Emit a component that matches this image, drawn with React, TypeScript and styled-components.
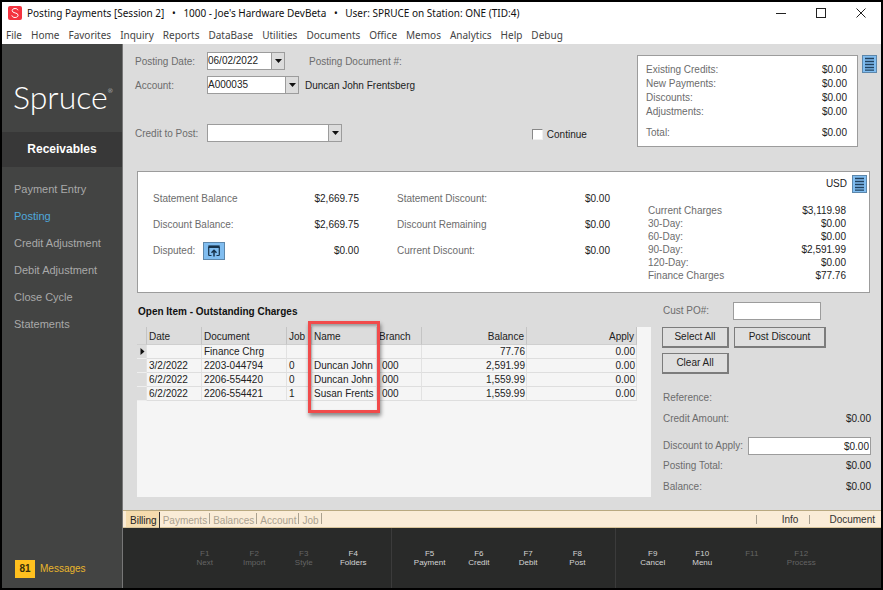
import React from "react";
import styled, { createGlobalStyle } from "styled-components";

const GlobalStyle = createGlobalStyle`
  *, *::before, *::after { box-sizing: border-box; }
  body {
    margin: 0;
    background: #000;
    font: 10px/14px "Liberation Sans", Arial, sans-serif;
    color: #222;
  }
  button, input, select { font: inherit; color: inherit; margin: 0; }
`;

const color = {
  sidebar: "#434443",
  panel: "#dcdcdc",
  label: "#6c6c6c",
  line: "#9c9c9c",
  blue: "#80bdf0",
};

const Window = styled.div`
  display: flex;
  flex-direction: column;
  min-height: 100vh;
  border: 2px solid #000;
  background: #fff;
`;

/* Title bar and menu */

const TitleBar = styled.header`
  display: flex;
  align-items: center;
  height: 22px;
  padding-left: 6px;
  font: 10px/16px "Noto Sans", "Open Sans", sans-serif;
  color: #111;
`;

const TitleText = styled.h1`
  display: flex;
  flex: 1;
  margin: 0 0 0 5px;
  font: inherit;
  white-space: pre;
`;

const Dot = styled.span`
  width: 19px;
  text-align: center;
`;

const CaptionButton = styled.button`
  display: grid;
  place-items: center;
  width: 40px;
  height: 22px;
  padding: 0;
  border: 0;
  background: none;
`;

const MenuBar = styled.nav`
  display: flex;
  gap: 9px;
  height: 20px;
  padding: 2px 4px 0;
  font: 10px/18px "Noto Sans", "Open Sans", sans-serif;
`;

const MenuLink = styled.a`
  color: #444;
  text-decoration: none;
`;

/* Sidebar */

const Body = styled.div`
  display: flex;
  flex: 1;
`;

const Sidebar = styled.aside`
  display: flex;
  flex-direction: column;
  flex: 0 0 121px;
  border-right: 1px solid #777;
  background: ${color.sidebar};
`;

const Brand = styled.div`
  display: flex;
  align-items: flex-start;
  height: 88px;
  padding: 33px 0 0 11px;
  font: 300 32px/40px Lato, sans-serif;
  color: #fff;
`;

const Registered = styled.span`
  margin-top: 10px;
  font-size: 6px;
  line-height: 8px;
`;

const SectionTitle = styled.h2`
  margin: 0;
  background: #383838;
  font-size: 12px;
  line-height: 35px;
  text-align: center;
  color: #fff;
`;

const SideNav = styled.nav`
  display: flex;
  flex-direction: column;
  flex: 1;
  padding: 9px 0 0 12px;
`;

const SideLink = styled.a<{ $active?: boolean }>`
  font-size: 11px;
  line-height: 27px;
  text-decoration: none;
  color: ${(p) => (p.$active ? "#4fa9dc" : "#a9a9a9")};
`;

const Messages = styled.a`
  display: flex;
  align-items: center;
  gap: 5px;
  padding: 0 0 10px 13px;
  color: #e9b62c;
  text-decoration: none;
`;

const Count = styled.b`
  width: 20px;
  background: #ffc01f;
  line-height: 18px;
  text-align: center;
  color: #3a3009;
`;

/* Work area */

const Main = styled.main`
  display: flex;
  flex-direction: column;
  flex: 1;
  min-width: 0;
  background: ${color.panel};
`;

const Top = styled.section`
  display: grid;
  grid-template-columns: minmax(0, 1fr) 221px 19px;
  padding: 8px 4px 0 12px;
`;

const Fields = styled.div`
  display: flex;
  flex-direction: column;
  gap: 6px;
`;

const FieldRow = styled.div<{ $spaced?: boolean }>`
  display: flex;
  align-items: center;
  height: 18px;
  margin-top: ${(p) => (p.$spaced ? "24px" : "0")};
  white-space: nowrap;
`;

const FieldLabel = styled.label`
  width: 72px;
  padding-top: 2px;
  color: ${color.label};
`;

const Note = styled.span<{ $muted?: boolean }>`
  margin-left: ${(p) => (p.$muted ? "24px" : "6px")};
  padding-top: 2px;
  color: ${(p) => (p.$muted ? color.label : "#222")};
`;

const Combo = styled.span<{ $width: number }>`
  display: grid;
  grid-template-columns: 1fr 13px;
  width: ${(p) => p.$width}px;
  height: 18px;
  border: 1px solid ${color.line};
  background: #fff;
`;

const ComboSelect = styled.select`
  grid-area: 1 / 1 / 2 / 3;
  appearance: none;
  border: 0;
  padding: 0 14px 1px 0;
  background: transparent;
  outline: 0;
`;

const ComboArrow = styled.span`
  grid-area: 1 / 2;
  display: grid;
  place-items: center;
  border-left: 1px solid ${color.line};
  background: ${color.panel};
  pointer-events: none;
`;

const CheckLabel = styled.label`
  display: flex;
  align-items: center;
  gap: 4px;
  margin: 3px 10% 0 auto;
`;

const Check = styled.input`
  appearance: none;
  width: 11px;
  height: 11px;
  margin: 0;
  border: 1px solid #f0f0f0;
  border-top-color: #888;
  border-left-color: #888;
  background: #fff;
  &:checked { background: #444; }
`;

const Summary = styled.div`
  margin-top: 3px;
  padding: 7px 10px 6px 8px;
  border: 1px solid ${color.line};
  background: #fff;
`;

const Line = styled.div<{ $height: number; $gap?: number }>`
  display: flex;
  align-items: center;
  justify-content: space-between;
  height: ${(p) => p.$height}px;
  margin-top: ${(p) => p.$gap ?? 0}px;
  white-space: nowrap;
`;

const Muted = styled.span`
  display: flex;
  align-items: center;
  gap: 8px;
  color: ${color.label};
`;

const ListButton = styled.button<{ $offset?: boolean }>`
  display: grid;
  place-items: center;
  width: 15px;
  height: 18px;
  margin: ${(p) => (p.$offset ? "3px 0 0 4px" : "0")};
  padding: 0;
  border: 1px solid #5d87ab;
  background: ${color.blue};
`;

const DisputeButton = styled(ListButton)`
  width: 22px;
`;

const Balances = styled.section`
  display: grid;
  grid-template-columns: 206fr 213fr 219fr;
  column-gap: 38px;
  margin: 24px 11px 0 14px;
  padding: 3px 2px 10px 15px;
  border: 1px solid ${color.line};
  background: #fff;
`;

const BalanceColumn = styled.div`
  padding-top: 11px;
`;

const Currency = styled.div`
  display: flex;
  align-items: center;
  justify-content: flex-end;
  gap: 5px;
  margin-bottom: 11px;
`;

const Aging = styled.div`
  padding-right: 21px;
`;

const Lower = styled.section`
  display: grid;
  grid-template-columns: minmax(0, 514fr) minmax(0, 209fr);
  column-gap: 11px;
  flex: 1;
  margin: 0 10px 13px 14px;
`;

const GridPane = styled.div`
  display: flex;
  flex-direction: column;
`;

const Heading = styled.h3`
  margin: 11px 0 7px 1px;
  font-size: 10px;
  line-height: 16px;
  color: #111;
`;

const GridBox = styled.div`
  flex: 1;
  padding-right: 14px;
  background: #f5f5f5;
`;

const Grid = styled.table`
  width: 100%;
  table-layout: fixed;
  border-collapse: separate;
  border-spacing: 0;
`;

const Col = styled.col<{ $share: number }>`
  width: ${(p) => p.$share}%;
`;

const HeadCell = styled.th<{ $right?: boolean }>`
  height: 18px;
  padding: 1px 2px 0;
  border-right: 1px solid #c4c4c4;
  border-bottom: 1px solid #cfcfcf;
  background: ${color.panel};
  font-weight: 400;
  line-height: 15px;
  text-align: ${(p) => (p.$right ? "right" : "left")};
  white-space: nowrap;
`;

const Cell = styled.td<{ $right?: boolean; $indent?: boolean }>`
  height: 14px;
  padding: 0 1px 0 ${(p) => (p.$indent ? "5px" : "2px")};
  border-right: 1px solid #e2e2e2;
  border-bottom: 1px solid #dedede;
  line-height: 13px;
  text-align: ${(p) => (p.$right ? "right" : "left")};
  white-space: nowrap;
`;

const MarkCell = styled(Cell)`
  background: ${color.panel};
  border-bottom-color: #eee;
  & > svg { display: block; margin: 0 auto; }
`;

const HighlightedHead = styled(HeadCell)`
  position: relative;
`;

const Highlight = styled.span`
  position: absolute;
  z-index: 1;
  top: -6px;
  left: -4px;
  right: -4px;
  height: 92px;
  border: 3px solid #f14b4b;
  box-shadow: 1px 3px 4px rgba(0, 0, 0, 0.45), inset 1px 2px 3px rgba(0, 0, 0, 0.3);
  pointer-events: none;
`;

const Actions = styled.div`
  display: flex;
  flex-direction: column;
  padding-top: 9px;
`;

const TotalRow = styled.div<{ $gap?: number }>`
  display: flex;
  align-items: center;
  justify-content: space-between;
  height: 18px;
  margin-top: ${(p) => p.$gap ?? 0}px;
  padding-left: 1px;
  white-space: nowrap;
`;

const Caption = styled.label<{ $width?: number }>`
  width: ${(p) => (p.$width ? `${p.$width}px` : "auto")};
  flex: none;
  color: ${color.label};
`;

const TextBox = styled.input<{ $wide?: boolean }>`
  flex: ${(p) => (p.$wide ? "1" : "0 0 88px")};
  min-width: 0;
  height: 18px;
  margin-right: ${(p) => (p.$wide ? "0" : "auto")};
  padding: 0 1px;
  border: 1px solid ${color.line};
  border-radius: 0;
  background: #fff;
  text-align: ${(p) => (p.$wide ? "right" : "left")};
  outline: 0;
`;

const ButtonGrid = styled.div`
  display: grid;
  grid-template-columns: 67px 92px;
  gap: 5px;
  margin: 7px 0 15px;
`;

const PushButton = styled.button`
  height: 21px;
  padding: 0;
  border: 1px solid #7c7c7c;
  border-right-width: 2px;
  border-bottom-width: 2px;
  background: #dfdfdf;
`;

/* Bottom bars */

const TabBar = styled.nav`
  display: flex;
  align-items: stretch;
  height: 18px;
  padding: 0 6px 0 3px;
  border-top: 1px solid #b9a980;
  border-bottom: 1px solid #d8c49a;
  background: #faecd7;
`;

const Tab = styled.a<{ $active?: boolean }>`
  display: flex;
  align-items: center;
  gap: 1px;
  padding: 4px 0 0 ${(p) => (p.$active ? "4px" : "3px")};
  background: ${(p) => (p.$active ? "#f5dcae" : "transparent")};
  color: ${(p) => (p.$active ? "#222" : "#aaa18f")};
  text-decoration: none;
  &::after {
    content: "";
    width: 1px;
    height: ${(p) => (p.$active ? "16px" : "11px")};
    margin: ${(p) => (p.$active ? "-3px 0 0 1px" : "-5px 0 0 1px")};
    background: ${(p) => (p.$active ? "#333" : "#aaa18f")};
  }
`;

const StatusItems = styled.div`
  display: flex;
  align-items: center;
  margin-left: auto;
  padding-top: 1px;
`;

const StatusLink = styled.a`
  color: #333;
  text-decoration: none;
`;

const Divider = styled.span`
  width: 1px;
  height: 9px;
  margin-left: 11px;
  background: #a79f8f;
  & + a { margin-left: 19px; }
  &:first-child + a { margin-left: 25px; }
`;

const KeyBar = styled.footer`
  display: grid;
  grid-template-columns: 269fr 224fr 265fr;
  height: 60px;
  background: #292a29;
`;

const KeyGroup = styled.div<{ $start: number; $end: number }>`
  display: grid;
  grid-template-columns: repeat(4, 1fr);
  align-items: start;
  padding: 21px ${(p) => p.$end}px 0 ${(p) => p.$start}px;
  border-right: 1px solid #3b3b3b;
  &:last-child { border-right: 0; }
`;

const Key = styled.button`
  display: flex;
  flex-direction: column;
  align-items: center;
  padding: 0;
  border: 0;
  background: none;
  font-size: 8px;
  line-height: 9px;
  color: #d4d4d4;
  &:disabled { color: #646464; }
`;

function ArrowIcon() {
  return (
    <svg width="7" height="4" aria-hidden="true">
      <path d="M0 0H7L3.5 4Z" fill="#111" />
    </svg>
  );
}

function ListIcon() {
  return (
    <svg width="9" height="14" aria-hidden="true">
      <path d="M0 1.5H9M0 4.5H9M0 7.5H9M0 10.5H9M0 13.2H9" stroke="#21425f" strokeWidth="1.3" />
    </svg>
  );
}

function OpenWindowIcon() {
  return (
    <svg width="12" height="12" viewBox="0 0 12 12" fill="none" stroke="#17334c" aria-hidden="true">
      <path d="M3.5 10.5H1.5Q.7 10.5.7 9.7V2M8.5 10.5H10.5Q11.3 10.5 11.3 9.7V2" strokeWidth="1.2" />
      <path d="M.3 1.7H11.7" strokeWidth="2.6" />
      <path d="M6 11.5V6M3.5 7.8L6 5.3L8.5 7.8" strokeWidth="1.5" />
    </svg>
  );
}

function AppIcon() {
  return (
    <svg width="14" height="14" viewBox="0 0 14 14" aria-hidden="true">
      <rect width="14" height="14" rx="2" fill="#f4333f" />
      <path
        d="M10 4.3C9.6 3 8.5 2.5 7.1 2.5C5.4 2.5 4.2 3.3 4.2 4.7C4.2 7.7 10.1 6.2 10.1 9.2C10.1 10.7 8.7 11.5 7.1 11.5C5.4 11.5 4.2 10.8 3.8 9.4"
        fill="none"
        stroke="#fff"
        strokeWidth="1"
      />
    </svg>
  );
}

const menus = ["File", "Home", "Favorites", "Inquiry", "Reports", "DataBase", "Utilities", "Documents", "Office", "Memos", "Analytics", "Help", "Debug"];
const sections = ["Payment Entry", "Posting", "Credit Adjustment", "Debit Adjustment", "Close Cycle", "Statements"];
const credits = ["Existing Credits:", "New Payments:", "Discounts:", "Adjustments:"];
const discounts = ["Statement Discount:", "Discount Remaining", "Current Discount:"];
const aging = [
  ["Current Charges", "$3,119.98"],
  ["30-Day:", "$0.00"],
  ["60-Day:", "$0.00"],
  ["90-Day:", "$2,591.99"],
  ["120-Day:", "$0.00"],
  ["Finance Charges", "$77.76"],
];
const columns = [
  { title: "", share: 2 },
  { title: "Date", share: 11 },
  { title: "Document", share: 17 },
  { title: "Job", share: 5 },
  { title: "Name", share: 13 },
  { title: "Branch", share: 9 },
  { title: "Balance", share: 21, right: true },
  { title: "Apply", share: 22, right: true },
];
const charges = [
  ["", "Finance Chrg", "", "", "", "77.76", "0.00"],
  ["3/2/2022", "2203-044794", "0", "Duncan John", "000", "2,591.99", "0.00"],
  ["6/2/2022", "2206-554420", "0", "Duncan John", "000", "1,559.99", "0.00"],
  ["6/2/2022", "2206-554421", "1", "Susan Frents", "000", "1,559.99", "0.00"],
];
const tabs = ["Billing", "Payments", "Balances", "Account", "Job"];
const keyGroups = [
  { start: 57, end: 13, keys: [["F1", "Next"], ["F2", "Import"], ["F3", "Style"], ["F4", "Folders", "on"]] },
  { start: 13, end: 13, keys: [["F5", "Payment", "on"], ["F6", "Credit", "on"], ["F7", "Debit", "on"], ["F8", "Post", "on"]] },
  { start: 12, end: 55, keys: [["F9", "Cancel", "on"], ["F10", "Menu", "on"], ["F11", ""], ["F12", "Process"]] },
];

function ComboBox({ id, value, width }: { id: string; value: string; width: number }) {
  return (
    <Combo $width={width}>
      <ComboSelect id={id} defaultValue={value}>
        <option value={value}>{value}</option>
      </ComboSelect>
      <ComboArrow>
        <ArrowIcon />
      </ComboArrow>
    </Combo>
  );
}

function ChargesTable() {
  return (
    <Grid>
      <colgroup>
        {columns.map((c) => (
          <Col key={c.title} $share={c.share} />
        ))}
      </colgroup>
      <thead>
        <tr>
          {columns.map((c) =>
            c.title === "Name" ? (
              <HighlightedHead key={c.title}>
                {c.title}
                <Highlight />
              </HighlightedHead>
            ) : (
              <HeadCell key={c.title} $right={c.right}>{c.title}</HeadCell>
            )
          )}
        </tr>
      </thead>
      <tbody>
        {charges.map((row, r) => (
          <tr key={r}>
            <MarkCell>
              {r === 0 && (
                <svg width="5" height="7" aria-hidden="true">
                  <path d="M.5 0L4.5 3.5L.5 7Z" fill="#111" />
                </svg>
              )}
            </MarkCell>
            {row.map((value, i) => (
              <Cell key={i} $right={i > 4} $indent={i === 4}>{value}</Cell>
            ))}
          </tr>
        ))}
      </tbody>
    </Grid>
  );
}

export default function App() {
  return (
    <Window>
      <GlobalStyle />
      <TitleBar>
        <AppIcon />
        <TitleText>
          Posting Payments [Session 2]<Dot>•</Dot>1000 - Joe's Hardware DevBeta<Dot>•</Dot>User: SPRUCE on Station: ONE (TID:4)
        </TitleText>
        <CaptionButton aria-label="Minimize">
          <svg width="10" height="10"><path d="M0 5.5H10" stroke="#222" /></svg>
        </CaptionButton>
        <CaptionButton aria-label="Maximize">
          <svg width="10" height="10"><rect x=".5" y=".5" width="9" height="9" fill="none" stroke="#222" /></svg>
        </CaptionButton>
        <CaptionButton aria-label="Close">
          <svg width="10" height="10"><path d="M.5 .5L9.5 9.5M9.5 .5L.5 9.5" stroke="#222" /></svg>
        </CaptionButton>
      </TitleBar>
      <MenuBar>
        {menus.map((m) => (
          <MenuLink key={m} href="#">{m}</MenuLink>
        ))}
      </MenuBar>
      <Body>
        <Sidebar>
          <Brand>Spruce<Registered>®</Registered></Brand>
          <SectionTitle>Receivables</SectionTitle>
          <SideNav>
            {sections.map((s) => (
              <SideLink key={s} href="#" $active={s === "Posting"}>{s}</SideLink>
            ))}
          </SideNav>
          <Messages href="#"><Count>81</Count>Messages</Messages>
        </Sidebar>
        <Main>
          <Top>
            <Fields>
              <FieldRow>
                <FieldLabel htmlFor="date">Posting Date:</FieldLabel>
                <ComboBox id="date" value="06/02/2022" width={78} />
                <Note $muted>Posting Document #:</Note>
              </FieldRow>
              <FieldRow>
                <FieldLabel htmlFor="account">Account:</FieldLabel>
                <ComboBox id="account" value="A000035" width={92} />
                <Note>Duncan John Frentsberg</Note>
              </FieldRow>
              <FieldRow $spaced>
                <FieldLabel htmlFor="credit">Credit to Post:</FieldLabel>
                <ComboBox id="credit" value="" width={135} />
                <CheckLabel><Check type="checkbox" />Continue</CheckLabel>
              </FieldRow>
            </Fields>
            <Summary>
              {credits.map((c) => (
                <Line key={c} $height={14}><Muted>{c}</Muted><span>$0.00</span></Line>
              ))}
              <Line $height={14} $gap={7}><Muted>Total:</Muted><span>$0.00</span></Line>
            </Summary>
            <ListButton $offset aria-label="Credit details"><ListIcon /></ListButton>
          </Top>
          <Balances>
            <BalanceColumn>
              <Line $height={26}><Muted>Statement Balance</Muted><span>$2,669.75</span></Line>
              <Line $height={26}><Muted>Discount Balance:</Muted><span>$2,669.75</span></Line>
              <Line $height={26}>
                <Muted>Disputed:<DisputeButton aria-label="Open disputed items"><OpenWindowIcon /></DisputeButton></Muted>
                <span>$0.00</span>
              </Line>
            </BalanceColumn>
            <BalanceColumn>
              {discounts.map((d) => (
                <Line key={d} $height={26}><Muted>{d}</Muted><span>$0.00</span></Line>
              ))}
            </BalanceColumn>
            <div>
              <Currency>USD<ListButton aria-label="Balance details"><ListIcon /></ListButton></Currency>
              <Aging>
                {aging.map(([name, value]) => (
                  <Line key={name} $height={13}><Muted>{name}</Muted><span>{value}</span></Line>
                ))}
              </Aging>
            </div>
          </Balances>
          <Lower>
            <GridPane>
              <Heading>Open Item - Outstanding Charges</Heading>
              <GridBox><ChargesTable /></GridBox>
            </GridPane>
            <Actions>
              <TotalRow>
                <Caption htmlFor="po" $width={70}>Cust PO#:</Caption>
                <TextBox id="po" />
              </TotalRow>
              <ButtonGrid>
                <PushButton>Select All</PushButton>
                <PushButton>Post Discount</PushButton>
                <PushButton>Clear All</PushButton>
              </ButtonGrid>
              <TotalRow><Muted>Reference:</Muted></TotalRow>
              <TotalRow $gap={3}><Muted>Credit Amount:</Muted><span>$0.00</span></TotalRow>
              <TotalRow $gap={9}>
                <Caption htmlFor="discount" $width={85}>Discount to Apply:</Caption>
                <TextBox id="discount" $wide defaultValue="$0.00" />
              </TotalRow>
              <TotalRow $gap={2}><Muted>Posting Total:</Muted><span>$0.00</span></TotalRow>
              <TotalRow $gap={3}><Muted>Balance:</Muted><span>$0.00</span></TotalRow>
            </Actions>
          </Lower>
          <TabBar>
            {tabs.map((t) => (
              <Tab key={t} href="#" $active={t === "Billing"}>{t}</Tab>
            ))}
            <StatusItems>
              <Divider /><StatusLink href="#">Info</StatusLink>
              <Divider /><StatusLink href="#">Document</StatusLink>
            </StatusItems>
          </TabBar>
          <KeyBar>
            {keyGroups.map((g, i) => (
              <KeyGroup key={i} $start={g.start} $end={g.end}>
                {g.keys.map(([key, name, on]) => (
                  <Key key={key} disabled={!on}>
                    <span>{key}</span>
                    <span>{name}</span>
                  </Key>
                ))}
              </KeyGroup>
            ))}
          </KeyBar>
        </Main>
      </Body>
    </Window>
  );
}
